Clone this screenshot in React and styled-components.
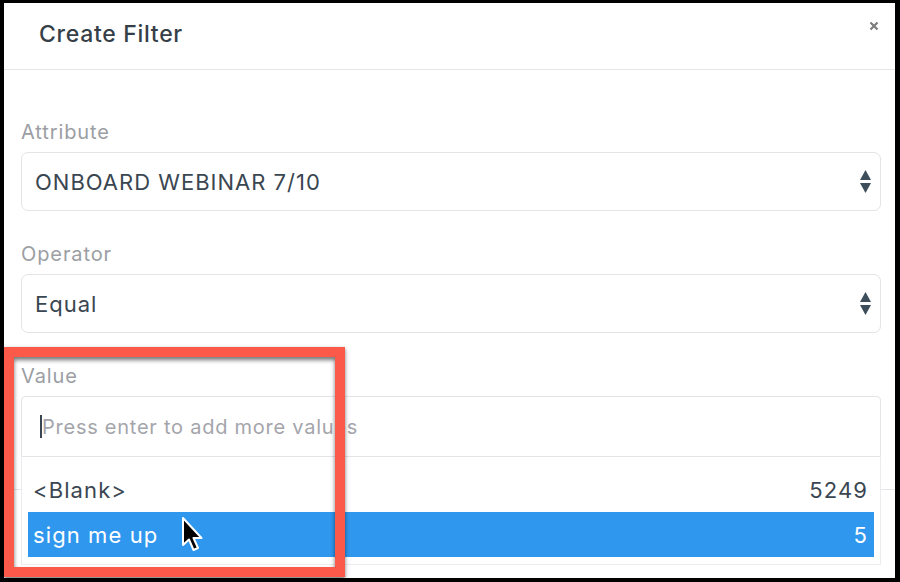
import React from "react";
import styled, { createGlobalStyle } from "styled-components";

const GlobalStyle = createGlobalStyle`
  html, body {
    margin: 0;
    padding: 0;
    background: #000;
  }
  body {
    font-family: Inter, "Liberation Sans", sans-serif;
  }
`;

const Frame = styled.div`
  width: 900px;
  height: 582px;
  box-sizing: border-box;
  padding: 3px 5px 4px 4px;
  position: relative;
  overflow: hidden;
`;

const Modal = styled.div`
  height: 100%;
  background: #fff;
  display: flex;
  flex-direction: column;
`;

const Header = styled.div`
  height: 67px;
  box-sizing: border-box;
  border-bottom: 1px solid #e6e6ea;
  display: flex;
  justify-content: space-between;
  padding: 0 16px 5px 35px;
  align-items: center;
`;

const Title = styled.h4`
  margin: 0;
  font-size: 23px;
  font-weight: 500;
  letter-spacing: 0.7px;
  color: #363f48;
`;

const Close = styled.button`
  align-self: flex-start;
  margin-top: 18px;
  border: none;
  background: none;
  padding: 0;
  width: 10px;
  height: 10px;
  display: flex;
`;

const Body = styled.div`
  padding: 48px 14px 32px 17px;
`;

const Field = styled.div`
  position: relative;
  & + & {
    margin-top: 29px;
  }
`;

const Label = styled.div`
  font-size: 20px;
  line-height: 24px;
  letter-spacing: 0.9px;
  color: #9b9ea3;
  padding-top: 2px;
  margin-bottom: 8px;
`;

const SelectBox = styled.div`
  height: 59px;
  box-sizing: border-box;
  border: 1px solid #e3e3e8;
  border-radius: 7px;
  display: flex;
  align-items: center;
  justify-content: space-between;
  padding: 0 9px 0 13px;
  font-size: 22px;
  letter-spacing: 1px;
  color: #3a4651;
`;

const InputBox = styled.div`
  height: 61px;
  box-sizing: border-box;
  border: 1px solid #e3e3e8;
  border-radius: 4px 4px 0 0;
  display: flex;
  align-items: center;
  padding-left: 18px;
  font-size: 20px;
  letter-spacing: 0.75px;
  color: #a4a5ab;
`;

const Caret = styled.span`
  display: inline-block;
  width: 2px;
  height: 23px;
  background: #3a4651;
`;

const Dropdown = styled.div`
  position: absolute;
  left: 0;
  right: 0;
  top: 100%;
  background: #fff;
  border: 1px solid #ececf0;
  border-top: none;
  padding: 10px 6px 7px;
`;

const Option = styled.div`
  height: 45px;
  display: flex;
  align-items: center;
  justify-content: space-between;
  padding: 0 6px 0 5px;
  font-size: 22px;
  letter-spacing: 1.1px;
  color: ${(p) => (p.$active ? "#fff" : "#3a4651")};
  background: ${(p) => (p.$active ? "#2f97ee" : "transparent")};
`;

const Footer = styled.div`
  flex: 1;
  border-top: 1px solid #e6e6ea;
`;

const Callout = styled.div`
  position: absolute;
  left: 4px;
  top: 347px;
  width: 341px;
  height: 230px;
  box-sizing: border-box;
  border: 10px solid #fb5a4a;
  box-shadow: 0 2px 4px rgba(0, 0, 0, 0.55), inset 0 3px 4px rgba(0, 0, 0, 0.55);
  pointer-events: none;
`;

const Pointer = styled.svg`
  position: absolute;
  left: 181px;
  top: 516px;
`;

const SortArrows = () => (
  <svg width="11" height="24" viewBox="0 0 11 24">
    <path d="M5.5 0 L11 10 L0 10 Z" fill="#3d4e5a" />
    <path d="M0 13 L11 13 L5.5 23 Z" fill="#3d4e5a" />
  </svg>
);

const options = [
  { label: "<Blank>", count: 5249 },
  { label: "sign me up", count: 5, active: true },
];

export default function App() {
  return (
    <>
      <GlobalStyle />
      <Frame>
        <Modal>
          <Header>
            <Title>Create Filter</Title>
            <Close aria-label="close">
              <svg width="10" height="10" viewBox="0 0 10 10">
                <path d="M1.5 1.5 L8.5 8.5 M8.5 1.5 L1.5 8.5" stroke="#7b7b7b" strokeWidth="2.2" />
              </svg>
            </Close>
          </Header>
          <Body>
            <Field>
              <Label>Attribute</Label>
              <SelectBox>
                ONBOARD WEBINAR 7/10
                <SortArrows />
              </SelectBox>
            </Field>
            <Field>
              <Label>Operator</Label>
              <SelectBox>
                Equal
                <SortArrows />
              </SelectBox>
            </Field>
            <Field>
              <Label>Value</Label>
              <InputBox>
                <Caret />
                Press enter to add more values
              </InputBox>
              <Dropdown>
                {options.map((o) => (
                  <Option key={o.label} $active={o.active}>
                    <span>{o.label}</span>
                    <span>{o.count}</span>
                  </Option>
                ))}
              </Dropdown>
            </Field>
          </Body>
          <Footer />
        </Modal>
        <Callout />
        <Pointer width="24" height="38" viewBox="0 0 24 38">
          <path
            d="M2 2 L2 29 L8 23.5 L12.5 34 L17 32 L12.5 22 L20.5 22 Z"
            fill="#000"
            stroke="#fff"
            strokeWidth="2"
            strokeLinejoin="round"
          />
        </Pointer>
      </Frame>
    </>
  );
}
